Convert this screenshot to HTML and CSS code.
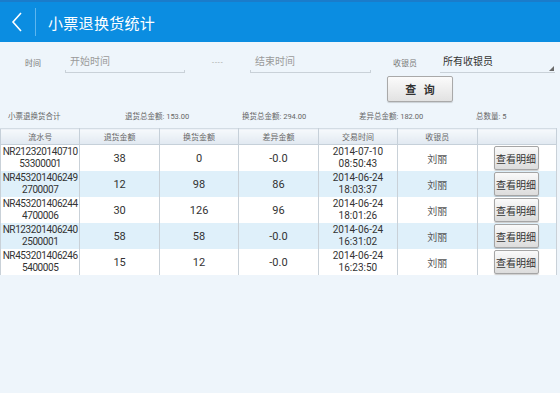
FILE: index.html
```html
<!DOCTYPE html>
<html>
<head>
    <meta charset="utf-8">
    <link rel="stylesheet" href="styles.css">
    <title>小票退换货统计</title>
</head>
<body>
    <div class="topbar">
        <span class="back">
            <svg width="12" height="20" viewBox="0 0 12 20"><path d="M10 1 L2 10 L10 19" fill="none" stroke="#ffffff" stroke-width="1.6"/></svg>
        </span>
        <span class="divider"></span>
        <h1 class="title">小票退换货统计</h1>
    </div>

    <!-- Filters -->
    <div class="filters">
        <span class="label time-label">时间</span>
        <div class="field start">开始时间</div>
        <span class="dash">----</span>
        <div class="field end">结束时间</div>
        <span class="label cashier-label">收银员</span>
        <div class="field select">所有收银员<span class="arrow"></span></div>
    </div>

    <div class="query-row">
        <button class="query-btn">查&nbsp;&nbsp;&nbsp;询</button>
    </div>

    <div class="summary">
        <span class="sum-title">小票退换货合计</span>
        <span class="sum-item">退货总金额: 153.00</span>
        <span class="sum-item">换货总金额: 294.00</span>
        <span class="sum-item">差异总金额: 182.00</span>
        <span class="sum-item">总数量: 5</span>
    </div>

    <table class="records">
        <thead>
            <tr>
                <th>流水号</th>
                <th>退货金额</th>
                <th>换货金额</th>
                <th>差异金额</th>
                <th>交易时间</th>
                <th>收银员</th>
                <th></th>
            </tr>
        </thead>
        <tbody>
            <tr>
                <td class="serial">NR212320140710<br>53300001</td>
                <td>38</td>
                <td>0</td>
                <td>-0.0</td>
                <td class="time">2014-07-10<br>08:50:43</td>
                <td class="cashier">刘丽</td>
                <td><button class="detail-btn">查看明细</button></td>
            </tr>
            <tr class="alt">
                <td class="serial">NR453201406249<br>2700007</td>
                <td>12</td>
                <td>98</td>
                <td>86</td>
                <td class="time">2014-06-24<br>18:03:37</td>
                <td class="cashier">刘丽</td>
                <td><button class="detail-btn">查看明细</button></td>
            </tr>
            <tr>
                <td class="serial">NR453201406244<br>4700006</td>
                <td>30</td>
                <td>126</td>
                <td>96</td>
                <td class="time">2014-06-24<br>18:01:26</td>
                <td class="cashier">刘丽</td>
                <td><button class="detail-btn">查看明细</button></td>
            </tr>
            <tr class="alt">
                <td class="serial">NR123201406240<br>2500001</td>
                <td>58</td>
                <td>58</td>
                <td>-0.0</td>
                <td class="time">2014-06-24<br>16:31:02</td>
                <td class="cashier">刘丽</td>
                <td><button class="detail-btn">查看明细</button></td>
            </tr>
            <tr>
                <td class="serial">NR453201406246<br>5400005</td>
                <td>15</td>
                <td>12</td>
                <td>-0.0</td>
                <td class="time">2014-06-24<br>16:23:50</td>
                <td class="cashier">刘丽</td>
                <td><button class="detail-btn">查看明细</button></td>
            </tr>
        </tbody>
    </table>
</body>
</html>
```

FILE: styles.css
```css
body {
    margin: 0;
    padding: 0;
    background-color: #eef5fb;
    font-family: Roboto, "Noto Sans CJK SC", sans-serif;
    color: #333333;
    height: 393px;
    overflow: hidden;
}

/* Top bar */
.topbar {
    height: 40px;
    background-color: #0b8de1;
    border-top: 2px solid #1a7ccb;
    display: flex;
    align-items: center;
}

.back {
    width: 12px;
    height: 20px;
    margin-left: 11px;
    display: flex;
}

.divider {
    width: 1px;
    height: 28px;
    background-color: #5db6ef;
    margin-left: 12px;
}

.title {
    margin: 0 0 0 12px;
    font-size: 15px;
    font-weight: normal;
    color: #ffffff;
    letter-spacing: 0.3px;
}

/* Filters */
.filters {
    display: flex;
    align-items: flex-end;
    height: 20px;
    margin-top: 11px;
}

.label {
    font-size: 8px;
    color: #777777;
    padding-bottom: 5px;
    white-space: nowrap;
    box-sizing: border-box;
    flex: none;
}

.time-label {
    width: 65px;
    padding-left: 25px;
}

.field {
    position: relative;
    flex: none;
    height: 19px;
    box-sizing: border-box;
    padding-left: 5px;
    font-size: 10px;
    line-height: 16px;
    color: #9a9a9a;
    border-bottom: 1px solid #c9d1d8;
}

.field::before,
.field::after {
    content: "";
    position: absolute;
    bottom: -1px;
    width: 1px;
    height: 3px;
    background-color: #c9d1d8;
}

.field::before {
    left: 0;
}

.field::after {
    right: 0;
}

.start {
    width: 120px;
}

.end {
    width: 121px;
}

.dash {
    width: 65px;
    padding-left: 27px;
    box-sizing: border-box;
    font-size: 7px;
    letter-spacing: 1px;
    color: #a0a0a0;
    padding-bottom: 6px;
    flex: none;
}

.cashier-label {
    width: 69px;
    padding-left: 22px;
}

.select {
    width: 115px;
    padding-left: 3px;
    color: #333333;
}

.select::before,
.select::after {
    display: none;
}

.arrow {
    position: absolute;
    right: 1px;
    bottom: 1px;
    width: 0;
    height: 0;
    border-left: 5px solid transparent;
    border-bottom: 5px solid #6a6a6a;
}

/* Query button */
.query-row {
    padding-left: 387px;
    margin-top: 3px;
}

.query-btn {
    width: 66px;
    height: 26px;
    background: linear-gradient(#fbfbfb, #e2e2e2);
    border: 1px solid #a9a9a9;
    border-radius: 2px;
    box-shadow: 0 1px 1px rgba(0, 0, 0, 0.15);
    font-family: "Noto Sans CJK SC", sans-serif;
    font-size: 11px;
    font-weight: bold;
    color: #333333;
    padding: 0;
}

/* Summary */
.summary {
    display: flex;
    padding-left: 8px;
    margin-top: 8px;
    height: 17px;
    font-size: 7.5px;
    color: #666666;
}

.sum-title,
.sum-item {
    width: 117px;
    flex: none;
}

/* Table */
.records {
    width: 557px;
    border-collapse: collapse;
    table-layout: fixed;
    margin-top: 1px;
    border-left: 1px solid #9aa3ab;
}

.records th {
    height: 15px;
    padding: 0;
    font-size: 8px;
    font-weight: normal;
    color: #666666;
    background: linear-gradient(#f6f9fc, #e1e9f1);
    border: 1px solid #c6d0d9;
    border-top: 1px solid #d3dce4;
}

.records td {
    height: 26px;
    padding: 0;
    text-align: center;
    font-size: 11px;
    color: #333333;
    background-color: #ffffff;
    border-left: 1px solid #c9d1d8;
    border-right: 1px solid #c9d1d8;
}

.records tr.alt td {
    background-color: #dff0fa;
}

.records td.serial {
    font-size: 10px;
    letter-spacing: -0.4px;
    line-height: 12px;
    white-space: nowrap;
}

.records td.time {
    font-size: 10px;
    line-height: 12px;
}

.records td.cashier {
    font-family: "Noto Sans CJK SC", sans-serif;
    font-size: 10px;
    color: #555555;
}

.detail-btn {
    width: 45px;
    height: 24px;
    padding: 0;
    margin-left: 16px;
    background: linear-gradient(#fafafa, #dcdcdc);
    border: 1px solid #a5a5a5;
    border-radius: 2px;
    box-shadow: 0 1px 1px rgba(0, 0, 0, 0.2);
    font-family: "Noto Sans CJK SC", sans-serif;
    font-size: 10px;
    color: #333333;
    display: block;
}
```
